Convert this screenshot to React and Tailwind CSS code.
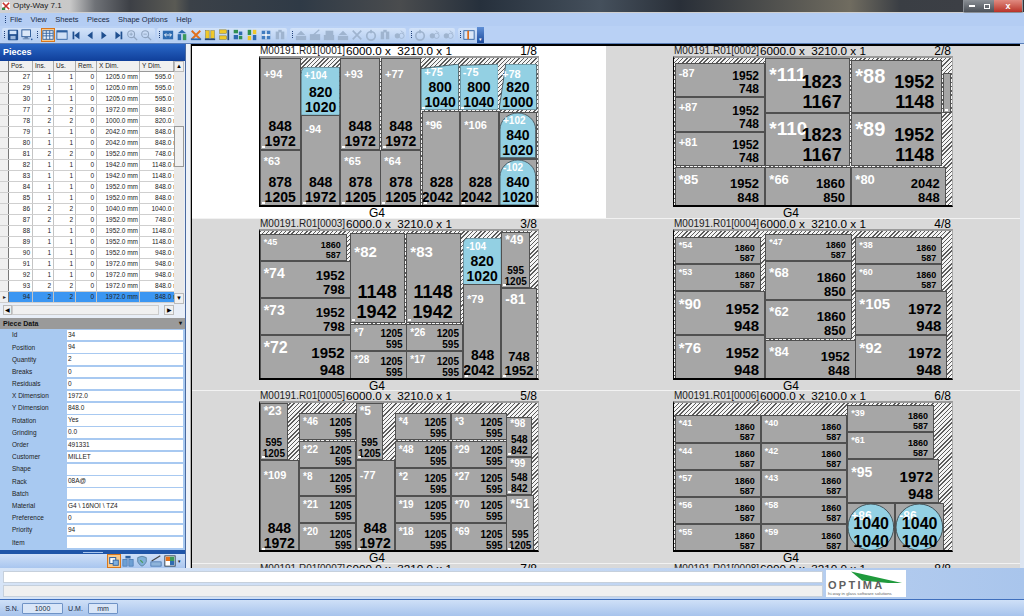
import React from "react";

const sans = "[font-family:'Liberation_Sans',Arial,sans-serif]";

const BLUE = "#93d0e3";
const shapes = {
  roundtl: <path d="M14 0H100V100H0V16Q0 0 14 0Z" />,
  slantL: <path d="M0 10L100 0V100H0Z" />,
  slantR: <path d="M0 3L100 0V100H0Z" />,
  cut: <path d="M18 0H100V100H0Z" />,
  arch: <path d="M0 100V37A50 37 0 0 1 100 37V100Z" />,
  circle: <ellipse cx="50" cy="50" rx="50" ry="50" />,
};

// [x1, y1, x2, y2, label, dimA, dimB, labelSize, dimSize, options]  (coordinates are on a 3x grid of the sheet)
const P = (x1, y1, x2, y2, l, a, b, ls, ds, o = {}) => ({ x1, y1, x2, y2, l, a, b, ls, ds, ...o });
const Cu = { c: 1, m: 1 };

const sheets = [
  {
    id: "0001", n: "1/8", ox: 28, oy: 40, pieces: [
      P(30, 47, 150, 320, "+94", "848", "1972", 11, 14, { ...Cu, t: 10 }),
      P(155, 73, 268, 215, "+104", "820", "1020", 10, 14, { c: 1, s: "roundtl", t: 4 }),
      P(155, 217, 268, 488, "-94", "848", "1972", 11, 14, { ...Cu, t: 8 }),
      P(272, 47, 388, 320, "+93", "848", "1972", 11, 14, { ...Cu, t: 10 }),
      P(394, 47, 510, 320, "+77", "848", "1972", 11, 14, { ...Cu, t: 10 }),
      P(30, 322, 150, 488, "*63", "878", "1205", 11, 14, { ...Cu, t: 5 }),
      P(272, 322, 390, 488, "*65", "878", "1205", 11, 14, { ...Cu, t: 5 }),
      P(392, 322, 512, 488, "*64", "878", "1205", 11, 14, { ...Cu, t: 5 }),
      P(515, 65, 625, 200, "+75", "800", "1040", 11, 14, { ...Cu, s: "slantL", t: 3 }),
      P(630, 65, 742, 200, "-75", "800", "1040", 11, 14, { ...Cu, s: "slantR", t: 3 }),
      P(748, 65, 858, 200, "+78", "820", "1000", 11, 14, { c: 1, s: "cut", t: 5 }),
      P(516, 205, 628, 488, "*96", "828", "2042", 11, 14, { m: 1, t: 8 }),
      P(632, 205, 745, 488, "*106", "828", "2042", 11, 14, { m: 1, t: 8 }),
      P(748, 208, 858, 345, "+102", "840", "1020", 10, 14, { c: 1, s: "arch", bg: 1, t: 3 }),
      P(748, 350, 858, 488, "-102", "840", "1020", 10, 14, { c: 1, s: "arch", bg: 1, t: 3 }),
    ],
  },
  {
    id: "0002", n: "2/8", ox: 25, oy: 40, pieces: [
      P(30, 60, 298, 160, "-87", "1952", "748", 11, 12, { t: 4 }),
      P(30, 163, 298, 265, "+87", "1952", "748", 11, 12, { t: 4 }),
      P(30, 267, 298, 368, "+81", "1952", "748", 11, 12, { t: 4 }),
      P(30, 372, 298, 488, "*85", "1952", "848", 13, 13, { t: 5 }),
      P(302, 47, 552, 207, "*111", "1823", "1167", 19, 18, { t: 6 }),
      P(302, 210, 552, 368, "*110", "1823", "1167", 19, 18, { t: 5 }),
      P(560, 52, 830, 208, "*88", "1952", "1148", 20, 18, { t: 5 }),
      P(560, 212, 830, 368, "*89", "1952", "1148", 20, 18, { t: 5 }),
      P(835, 92, 857, 208, "", "", "", 9, 9, { m: 1 }),
      P(302, 372, 556, 488, "*66", "1860", "850", 13, 13, { t: 5 }),
      P(560, 372, 840, 488, "*80", "2042", "848", 13, 13, { t: 5 }),
    ],
  },
  {
    id: "0003", n: "3/8", ox: 28, oy: 43, pieces: [
      P(30, 60, 288, 137, "*45", "1860", "587", 9, 9, { t: 3 }),
      P(30, 140, 300, 248, "*74", "1952", "798", 14, 13, { t: 4 }),
      P(30, 250, 300, 360, "*73", "1952", "798", 14, 13, { t: 4 }),
      P(30, 363, 300, 492, "*72", "1952", "948", 16, 15, { t: 4 }),
      P(302, 57, 462, 325, "*82", "1148", "1942", 15, 18, { m: 1, t: 10 }),
      P(470, 57, 630, 325, "*83", "1148", "1942", 15, 18, { m: 1, t: 10 }),
      P(302, 328, 468, 408, "*7", "1205", "595", 10, 10, { t: 3 }),
      P(302, 411, 468, 492, "*28", "1205", "595", 10, 10, { t: 3 }),
      P(470, 328, 637, 408, "*26", "1205", "595", 10, 10, { t: 3 }),
      P(470, 411, 637, 492, "*17", "1205", "595", 10, 10, { t: 3 }),
      P(640, 70, 752, 207, "-104", "820", "1020", 10, 14, { c: 1, s: "roundtl", t: 4 }),
      P(755, 53, 838, 220, "*49", "595", "1205", 12, 10, { ...Cu, t: 1 }),
      P(640, 210, 752, 492, "*79", "848", "2042", 11, 14, { m: 1, t: 9 }),
      P(755, 222, 858, 492, "-81", "748", "1952", 14, 13, { ...Cu, t: 3 }),
    ],
  },
  {
    id: "0004", n: "4/8", ox: 25, oy: 43, pieces: [
      P(30, 68, 285, 147, "*54", "1860", "587", 9, 9, { t: 3 }),
      P(30, 150, 285, 227, "*53", "1860", "587", 9, 9, { t: 3 }),
      P(302, 58, 558, 137, "*47", "1860", "587", 9, 9, { t: 3 }),
      P(302, 140, 558, 255, "*68", "1860", "850", 13, 13, { t: 4 }),
      P(302, 258, 558, 373, "*62", "1860", "850", 13, 13, { t: 4 }),
      P(302, 377, 570, 492, "*84", "1952", "848", 13, 13, { t: 4 }),
      P(572, 68, 830, 147, "*38", "1860", "587", 9, 9, { t: 3 }),
      P(572, 150, 830, 227, "*60", "1860", "587", 9, 9, { t: 3 }),
      P(30, 230, 298, 360, "*90", "1952", "948", 15, 15, { t: 4 }),
      P(30, 363, 298, 492, "*76", "1952", "948", 15, 15, { t: 4 }),
      P(572, 230, 845, 360, "*105", "1972", "948", 15, 15, { t: 4 }),
      P(572, 363, 845, 492, "*92", "1972", "948", 15, 15, { t: 4 }),
    ],
  },
  {
    id: "0005", n: "5/8", ox: 28, oy: 43, pieces: [
      P(30, 50, 112, 217, "*23", "595", "1205", 12, 10, { ...Cu, t: 1 }),
      P(148, 80, 315, 158, "*46", "1205", "595", 10, 10, { t: 3 }),
      P(148, 162, 315, 242, "*22", "1205", "595", 10, 10, { t: 3 }),
      P(148, 245, 315, 325, "*8", "1205", "595", 10, 10, { t: 3 }),
      P(148, 328, 315, 407, "*21", "1205", "595", 10, 10, { t: 3 }),
      P(148, 410, 315, 492, "*20", "1205", "595", 10, 10, { t: 3 }),
      P(30, 220, 145, 492, "*109", "848", "1972", 11, 14, { ...Cu, t: 9 }),
      P(318, 50, 398, 217, "*5", "595", "1205", 12, 10, { ...Cu, t: 1 }),
      P(318, 220, 432, 492, "-77", "848", "1972", 11, 14, { ...Cu, t: 9 }),
      P(435, 80, 600, 158, "*4", "1205", "595", 10, 10, { t: 3 }),
      P(603, 80, 768, 158, "*3", "1205", "595", 10, 10, { t: 3 }),
      P(435, 162, 600, 242, "*48", "1205", "595", 10, 10, { t: 3 }),
      P(603, 162, 768, 242, "*29", "1205", "595", 10, 10, { t: 3 }),
      P(435, 245, 600, 325, "*2", "1205", "595", 10, 10, { t: 3 }),
      P(603, 245, 768, 325, "*27", "1205", "595", 10, 10, { t: 3 }),
      P(435, 328, 600, 407, "*19", "1205", "595", 10, 10, { t: 3 }),
      P(603, 328, 768, 407, "*70", "1205", "595", 10, 10, { t: 3 }),
      P(435, 410, 600, 492, "*18", "1205", "595", 10, 10, { t: 3 }),
      P(603, 410, 768, 492, "*69", "1205", "595", 10, 10, { t: 3 }),
      P(770, 92, 845, 207, "*98", "548", "842", 10, 10, { ...Cu, t: 1 }),
      P(770, 210, 845, 323, "*99", "548", "842", 10, 10, { ...Cu, t: 1 }),
      P(770, 326, 850, 492, "*51", "595", "1205", 13, 10, { ...Cu, t: 1 }),
    ],
  },
  {
    id: "0006", n: "6/8", ox: 25, oy: 43, pieces: [
      ...[85, 168, 250, 331, 413].map((y, i) =>
        P(30, y, 285, y + (i === 0 ? 80 : 79), ["*41", "*44", "*57", "*56", "*55"][i], "1860", "587", 9, 9, { t: 3 })),
      ...[85, 168, 250, 331, 413].map((y, i) =>
        P(288, y, 545, y + (i === 0 ? 80 : 79), ["*40", "*42", "*43", "*58", "*59"][i], "1860", "587", 9, 9, { t: 3 })),
      P(548, 55, 805, 133, "*39", "1860", "587", 9, 9, { t: 3 }),
      P(548, 136, 805, 213, "*61", "1860", "587", 9, 9, { t: 3 }),
      P(548, 216, 820, 347, "*95", "1972", "948", 14, 15, { t: 5 }),
      P(548, 350, 688, 492, "+86", "1040", "1040", 12, 16, { c: 1, s: "circle", bg: 1, t: 6 }),
      P(692, 350, 835, 492, "-86", "1040", "1040", 12, 16, { c: 1, s: "circle", bg: 1, t: 6 }),
    ],
  },
];

function Piece({ p, ox, oy }) {
  const r = p.ds >= 16 ? 7 : p.ds === 14 ? 6 : p.ds === 10 ? 3 : 5;
  const box = {
    left: (p.x1 - ox) / 3 - 1,
    top: (p.y1 - oy) / 3 - 2,
    width: (p.x2 - p.x1) / 3 + 1,
    height: (p.y2 - p.y1) / 3 + 1,
  };
  const lh = Math.round(p.ds * 1.1);
  const shaped = !!p.s;
  const plainBg = !shaped || p.bg;
  return (
    <div
      className={`absolute overflow-hidden ${plainBg ? "bg-[#a6a6a6] border border-[#505050]" : ""}`}
      style={box}
    >
      {shaped && (
        <svg viewBox="0 0 100 100" preserveAspectRatio="none" className="absolute inset-0 w-full h-full">
          <g fill={BLUE} stroke="#3d4a50" strokeWidth="2">
            {shapes[p.s]}
          </g>
        </svg>
      )}
      <div
        className="absolute left-[3px] font-bold text-white leading-none"
        style={{ top: p.t ?? 2, fontSize: p.ls }}
      >
        {p.l}
      </div>
      <div
        className={`absolute inset-0 flex flex-col justify-end font-bold text-black ${p.c ? "items-center" : "items-end"}`}
        style={{ fontSize: p.ds, lineHeight: `${lh}px`, paddingRight: p.c ? 0 : r }}
      >
        <span>{p.a}</span>
        <span>{p.b}</span>
      </div>
      {p.m && <span className="absolute left-[1px] bottom-[1px] w-[3px] h-[2px] bg-white" />}
    </div>
  );
}

function Header({ id, n }) {
  return (
    <div className="flex w-[280px] h-[10px] items-center shrink-0 text-black">
      <span className="text-[10px] leading-[10px] pl-[1px] w-[87px] text-[#222] whitespace-nowrap">M00191.R01[{id}]</span>
      <span className="text-[11.7px] leading-[10px] whitespace-pre">6000.0 x  3210.0 x 1</span>
      <span className="text-[12px] leading-[10px] ml-auto pr-[2px]">{n}</span>
    </div>
  );
}

function SheetCell({ s, first }) {
  return (
    <div className={`flex flex-col items-center h-[172.5px] overflow-hidden border-b border-[#f2f2f2] ${first ? "bg-white" : "bg-[#d9d9d9]"}`}>
      <Header id={s.id} n={s.n} />
      <div className="relative overflow-hidden w-[280px] h-[151px] shrink-0 border-l border-b-2 border-t-2 border-r border-l-black border-b-black border-t-[#9a9a9a] border-r-[#a8a8a8] bg-[repeating-linear-gradient(135deg,#5c5c5c_0_1px,#f4f4f4_1px_3px)]">
        {s.pieces.map((p, i) => <Piece key={i} p={p} ox={s.ox} oy={s.oy} />)}
      </div>
      <div className="text-[12px] leading-[12px] text-black mr-[44px]">G4</div>
    </div>
  );
}

const rows = [
  [27, 1, 1, 0, "1205.0", "595.0"], [29, 1, 1, 0, "1205.0", "595.0"], [30, 1, 1, 0, "1205.0", "595.0"],
  [77, 2, 2, 0, "1972.0", "848.0"], [78, 2, 2, 0, "1000.0", "820.0"], [79, 1, 1, 0, "2042.0", "848.0"],
  [80, 1, 1, 0, "2042.0", "848.0"], [81, 2, 2, 0, "1952.0", "748.0"], [82, 1, 1, 0, "1942.0", "1148.0"],
  [83, 1, 1, 0, "1942.0", "1148.0"], [84, 1, 1, 0, "1952.0", "848.0"], [85, 1, 1, 0, "1952.0", "848.0"],
  [86, 2, 2, 0, "1040.0", "1040.0"], [87, 2, 2, 0, "1952.0", "748.0"], [88, 1, 1, 0, "1952.0", "1148.0"],
  [89, 1, 1, 0, "1952.0", "1148.0"], [90, 1, 1, 0, "1952.0", "948.0"], [91, 1, 1, 0, "1972.0", "948.0"],
  [92, 1, 1, 0, "1972.0", "948.0"], [93, 2, 2, 0, "1972.0", "848.0"], [94, 2, 2, 0, "1972.0", "848.0"],
];

const fields = [
  ["Id", "34"], ["Position", "94"], ["Quantity", "2"], ["Breaks", "0"], ["Residuals", "0"],
  ["X Dimension", "1972.0"], ["Y Dimension", "848.0"], ["Rotation", "Yes"], ["Grinding", "0.0"],
  ["Order", "491331"], ["Customer", "MILLET"], ["Shape", ""], ["Rack", "08A@"], ["Batch", ""],
  ["Material", "G4 \\ 16NOI \\ TZ4"], ["Preference", "0"], ["Priority", "94"], ["Item", ""],
];

const gridCols = "grid grid-cols-[9px_24px_21px_22px_21px_43px_34px]";

function PiecesTable() {
  const heads = ["Pos.", "Ins.", "Us.", "Rem.", "X Dim.", "Y Dim."];
  return (
    <div className="w-[174px] text-[6.5px] text-[#222]">
      <div className={`${gridCols} h-[11px] leading-[10px] bg-[#f0f0f0] border-b border-[#999]`}>
        <div className="border-r border-[#777]" />
        {heads.map((h) => (
          <div key={h} className="pl-[2px] border-r border-[#aaa]">{h}</div>
        ))}
      </div>
      {rows.map((r, i) => {
        const sel = r[0] === 94;
        return (
          <div key={i} className={`${gridCols} h-[11px] leading-[10px] border-b border-[#cfcfcf] ${sel ? "bg-[#3b96f2]" : "bg-white"}`}>
            <div className="border-r border-[#777] bg-[#f0f0f0] flex items-center justify-center text-[6px] leading-none">
              {sel ? "▸" : ""}
            </div>
            {r.slice(0, 4).map((v, j) => (
              <div key={j} className="text-right pr-[2px] border-r border-[#c4c4c4]">{v}</div>
            ))}
            <div className="text-right pr-[1px] border-r border-[#c4c4c4] whitespace-nowrap">{r[4]} mm</div>
            <div className="flex justify-end overflow-hidden whitespace-nowrap"><span className="-mr-[10px]">{r[5]} mm</span></div>
          </div>
        );
      })}
    </div>
  );
}

function ScrollBtn({ children, className = "" }) {
  return (
    <div className={`flex items-center justify-center bg-[#f0f0f0] border border-[#bbb] text-[6px] leading-none text-black ${className}`}>
      {children}
    </div>
  );
}

function PieceData() {
  return (
    <div className="flex flex-col bg-[#a8c9f1] h-[232px]">
      <div className="h-[11px] flex items-center justify-between px-[3px] bg-[#9a9a9a] text-[7px] font-bold text-[#111]">
        <span>Piece Data</span><span className="text-[6px]">▾</span>
      </div>
      <div className="flex flex-col pt-[0.5px] pl-[12px] pr-[2px] gap-[1.7px]">
        {fields.map(([k, v]) => (
          <div key={k} className="flex h-[10.5px] items-center text-[6.5px] text-[#222]">
            <span className="w-[55px]">{k}</span>
            <span className="flex-1 h-full bg-white pl-[1px] leading-[10.5px] whitespace-nowrap">{v}</span>
          </div>
        ))}
      </div>
    </div>
  );
}

const Grip = ({ w = "w-[4px]" }) => (
  <span className={`${w} h-[12px] flex flex-col items-center justify-center gap-[1px] shrink-0`}>
    <i className="w-[1px] h-[1px] bg-[#22427a]" /><i className="w-[1px] h-[1px] bg-[#22427a]" />
    <i className="w-[1px] h-[1px] bg-[#22427a]" /><i className="w-[1px] h-[1px] bg-[#22427a]" />
  </span>
);

const D = "#1f4f8f";
const G = "#9fb4cf";
const Y = "#f0c92a";
const icons = {
  save: <><rect x="1" y="1" width="12" height="12" rx="1" fill={D} /><rect x="3" y="2" width="8" height="4" fill="#cfe3fa" /><rect x="4" y="8" width="6" height="4" fill="#9cb8dc" /></>,
  monitor: <><rect x="1" y="1" width="10" height="8" fill="#dbe8f8" stroke={D} /><rect x="4" y="9" width="4" height="2" fill="#5a7aa5" /><rect x="2" y="11" width="8" height="1" fill="#5a7aa5" /><circle cx="12.5" cy="12" r="1" fill="#2a5a9f" /></>,
  grid: <><rect x="1" y="2" width="12" height="10" fill="#e6effa" stroke="#2c5f9f" /><path d="M1 5H13M1 8H13M5 2V12M9 2V12" stroke="#2c5f9f" /></>,
  win: <><rect x="1" y="2" width="12" height="10" fill="#cfe0f6" stroke="#2c5f9f" /><rect x="1" y="2" width="12" height="2" fill="#2c5f9f" /></>,
  first: <><rect x="3" y="3" width="2" height="9" fill={D} /><path d="M11 3V12L5 7.5Z" fill={D} /></>,
  prev: <path d="M10 3V12L4 7.5Z" fill={D} />,
  next: <path d="M4 3V12L10 7.5Z" fill={D} />,
  last: <><rect x="10" y="3" width="2" height="9" fill={D} /><path d="M4 3V12L10 7.5Z" fill={D} /></>,
  zin: <><circle cx="6" cy="6" r="4" fill="none" stroke="#8fa4c0" strokeWidth="1.3" /><path d="M9 9L13 13" stroke="#8fa4c0" strokeWidth="1.5" /><path d="M4 6H8M6 4V8" stroke="#8fa4c0" /></>,
  zout: <><circle cx="6" cy="6" r="4" fill="none" stroke="#8fa4c0" strokeWidth="1.3" /><path d="M9 9L13 13" stroke="#8fa4c0" strokeWidth="1.5" /><path d="M4 6H8" stroke="#8fa4c0" /></>,
  fit: <><rect x="1" y="2" width="12" height="10" fill="#2e6bb0" /><path d="M3 7H11M3 7L5 5M3 7L5 9M11 7L9 5M11 7L9 9" stroke="#fff" /></>,
  stack: <><path d="M7 1L12 5H2Z" fill="#2e6bb0" /><rect x="2" y="6" width="4" height="7" fill="#2e6bb0" /><rect x="8" y="6" width="4" height="7" fill="#3d9a5a" /></>,
  xx: <><path d="M2 2L12 12M12 2L2 12" stroke="#e2701c" strokeWidth="2.2" /><rect x="1" y="11" width="12" height="2" fill="#2e6bb0" /></>,
  cols: <><rect x="2" y="2" width="4" height="9" fill={Y} stroke="#7a6a12" strokeWidth=".5" /><rect x="8" y="2" width="4" height="9" fill={Y} stroke="#7a6a12" strokeWidth=".5" /><rect x="1" y="11" width="12" height="2" fill="#274b7a" /></>,
  rows: <><rect x="2" y="1" width="8" height="4" fill={Y} stroke="#7a6a12" strokeWidth=".5" /><rect x="2" y="8" width="8" height="4" fill={Y} stroke="#7a6a12" strokeWidth=".5" /><rect x="11" y="1" width="2" height="12" fill="#274b7a" /></>,
  green: <><rect x="2" y="1" width="5" height="4" fill="#2f8f52" /><rect x="8" y="3" width="4" height="4" fill="#2e6bb0" /><rect x="2" y="7" width="5" height="5" fill="#2e6bb0" /><rect x="8" y="8" width="4" height="4" fill="#2f8f52" /></>,
  mix: <><rect x="2" y="1" width="4" height="6" fill="#2f8f52" /><rect x="8" y="1" width="4" height="5" fill={Y} /><rect x="2" y="8" width="4" height="5" fill={Y} /><rect x="8" y="7" width="4" height="6" fill="#2e6bb0" /></>,
  cross: <><rect x="2" y="2" width="10" height="10" fill="#3f7cc0" /><path d="M7 2V12M2 7H12" stroke="#fff" strokeWidth="1.5" /></>,
  d1: <><rect x="2" y="3" width="4" height="9" fill={G} /><rect x="8" y="3" width="4" height="9" fill={G} /><rect x="5" y="1" width="4" height="3" fill={G} /></>,
  d2: <><path d="M7 2L12 7H2Z" fill={G} /><rect x="1" y="8" width="12" height="5" fill={G} /></>,
  d3: <><rect x="1" y="6" width="12" height="7" fill={G} /><path d="M4 8L12 1" stroke={G} strokeWidth="1.5" /></>,
  d4: <><rect x="3" y="2" width="9" height="5" fill={G} /><rect x="1" y="7" width="12" height="6" fill={G} /></>,
  d5: <><path d="M2 2L12 12M12 2L2 12" stroke={G} strokeWidth="2" /></>,
  d6: <><circle cx="7" cy="8" r="5" fill="none" stroke={G} strokeWidth="2" /><rect x="6" y="1" width="2" height="4" fill={G} /></>,
  d7: <><circle cx="5" cy="8" r="3" fill={G} /><circle cx="10" cy="8" r="3" fill="none" stroke={G} /><path d="M9 2L13 5" stroke={G} /></>,
  panel: <><rect x="1" y="2" width="12" height="10" fill="#dbe8f8" stroke="#2c5f9f" /><rect x="5" y="2" width="2" height="10" fill="#e2701c" /></>,
  link: <><rect x="2" y="3" width="7" height="7" fill="#fff" stroke="#2c5f9f" strokeWidth="1.2" /><rect x="6" y="6" width="6" height="6" fill="#7fb0e0" stroke="#2c5f9f" /></>,
  bars: <><rect x="1" y="5" width="5" height="8" fill="#6ea0d4" stroke="#2c5f9f" strokeWidth=".6" /><rect x="8" y="5" width="5" height="8" fill="#6ea0d4" stroke="#2c5f9f" strokeWidth=".6" /><rect x="4" y="1" width="6" height="3" fill="#2c5f9f" /></>,
  shield: <><path d="M2 3Q7 0 12 3V8Q10 12 7 13Q4 12 2 8Z" fill="#7fb0d8" stroke="#5a7f9f" /><path d="M5 6L8 9" stroke="#4c9a5a" strokeWidth="1.4" /></>,
  stair: <><rect x="1" y="8" width="12" height="5" fill="#8fb4da" stroke="#2c5f9f" strokeWidth=".7" /><path d="M2 7L12 1" stroke="#444" strokeWidth="1.4" /></>,
  colorg: <><rect x="1" y="1" width="12" height="12" fill="#fff" stroke="#234" /><rect x="2" y="2" width="5" height="5" fill="#e2701c" /><rect x="7" y="7" width="5" height="5" fill="#2e6bb0" /><rect x="7" y="2" width="5" height="5" fill="#3d9a5a" /></>,
};

const Ico = ({ k, active }) => (
  <span className={`w-[14px] h-[14px] flex items-center justify-center shrink-0 ${active ? "bg-[#f9c98a] border border-[#d9771c]" : ""}`}>
    <svg viewBox="0 0 14 14" className="w-[12px] h-[12px]">{icons[k]}</svg>
  </span>
);

const Group = ({ children, className = "" }) => (
  <div className={`flex items-center h-[14px] rounded-[2px] bg-gradient-to-b from-[#d3e3f9] to-[#b4cdf0] ${className}`}>{children}</div>
);

function Toolbar() {
  return (
    <div className="h-[18px] flex items-center pl-[2px] bg-[#b9d1f5] border-b border-[#5a7fb8]">
      <Group className="w-[153px]">
        <Grip /><Ico k="save" /><Ico k="monitor" /><Grip w="w-[7px]" /><Ico k="grid" active /><Ico k="win" />
        <Ico k="first" /><Ico k="prev" /><Ico k="next" /><Ico k="last" /><Ico k="zin" /><Ico k="zout" />
      </Group>
      <Group className="ml-[2px] w-[130px]">
        <Grip /><Ico k="fit" /><Ico k="stack" /><Ico k="xx" /><Ico k="cols" /><Ico k="rows" /><Ico k="green" /><Ico k="mix" /><Ico k="cross" /><Ico k="d1" />
      </Group>
      <Group className="ml-[3px] w-[116px]">
        <Grip /><Ico k="d2" /><Ico k="d3" /><Ico k="d4" /><Ico k="d2" /><Ico k="d5" /><Ico k="d6" /><Ico k="d1" /><Ico k="d7" />
      </Group>
      <Group className="ml-[3px] w-[46px]">
        <Grip /><Ico k="d6" /><Ico k="d7" /><Ico k="d7" />
      </Group>
      <Group className="ml-[3px] w-[19px]">
        <Grip /><Ico k="panel" />
      </Group>
      <div className="w-[7px] h-[16px] bg-gradient-to-b from-[#5f8fd6] to-[#1d4b9c] text-white text-[5px] leading-none flex items-end justify-center pb-[1px]">▾</div>
    </div>
  );
}

function Logo() {
  return (
    <div className="relative w-[80px] h-[27px] bg-white overflow-hidden shrink-0">
      <svg viewBox="0 0 80 27" className="absolute inset-0 w-full h-full">
        <polygon points="25,1.5 76,13 62,13 36,10.5" fill="#1f9a3c" />
      </svg>
      <div className="absolute left-[2px] top-[10px] text-[11px] leading-[11px] font-bold text-[#5f5f5f] tracking-[2.3px] whitespace-nowrap">OPTIMA</div>
      <div className="absolute left-[2px] top-[21px] text-[4.3px] leading-[5px] text-[#666] whitespace-nowrap">hi-way in glass software solutions</div>
    </div>
  );
}

function TitleBar() {
  return (
    <div className="h-[13px] relative flex items-center bg-[linear-gradient(90deg,#d0d0d0_0,#c8c8c8_70px,#6f7277_95px,#3d4046_130px,#5a5a54_175px,#3b4148_190px,#2f3a46_300px,#4a4c4e_400px,#26303c_480px,#45505c_600px,#292f38_680px,#706c60_850px,#3a3e44_900px,#3c3f45_960px,#2c3138_1024px)] border-b border-[#cfcfcf]">
      <svg viewBox="0 0 10 10" className="ml-[2px] w-[8px] h-[8px]">
        <rect width="10" height="10" fill="#fff" /><path d="M1 1L9 9M9 1L1 9" stroke="#c7302a" strokeWidth="2" /><rect y="7" width="4" height="3" fill="#2e8a4a" />
      </svg>
      <span className="ml-[3px] text-[8px] leading-none text-[#1a1a1a]">Opty-Way 7.1</span>
      <div className="absolute right-[1px] top-0 h-[13px] flex border border-t-0 border-[#8a8f96] rounded-b-[2px] overflow-hidden">
        <div className="w-[15px] flex items-center justify-center bg-gradient-to-b from-[#8a8f95] to-[#4c5158]"><i className="w-[6px] h-[2px] bg-white" /></div>
        <div className="w-[15px] flex items-center justify-center bg-gradient-to-b from-[#8a8f95] to-[#4c5158]"><i className="w-[6px] h-[5px] border border-white" /></div>
        <div className="w-[28px] flex items-center justify-center bg-gradient-to-b from-[#e08a80] to-[#b83027] text-white text-[9px] leading-none font-bold">x</div>
      </div>
    </div>
  );
}

export default function App() {
  return (
    <div className={`w-[1024px] h-[616px] flex flex-col overflow-hidden bg-[#b9d1f5] ${sans}`}>
      <TitleBar />
      <div className="h-[13px] flex items-center pl-[3px] bg-[#b4cdf3] text-[7.5px] leading-none text-[#1a2a44]">
        <Grip />
        <div className="flex ml-[3px] gap-[8.5px]">
          <span>File</span><span>View</span><span>Sheets</span><span>Pieces</span><span>Shape Options</span><span>Help</span>
        </div>
      </div>
      <Toolbar />

      <div className="h-[524px] flex bg-[#dbe6f5]">
        <div className="w-[186px] flex flex-col bg-[#e8eef7] border-r border-[#4a6aa0]">
          <div className="h-[17px] flex items-center pl-[3px] bg-gradient-to-b from-[#2a68c8] to-[#103f9a] text-white font-bold text-[9px] leading-none">Pieces</div>
          <div className="flex h-[243px]">
            <PiecesTable />
            <div className="w-[10px] flex flex-col bg-[#e9e9e9]">
              <ScrollBtn className="h-[11px]">▲</ScrollBtn>
              <div className="h-[54px]" />
              <div className="h-[41px] bg-[#f0f0f0] border border-[#999]" />
              <div className="flex-1" />
              <ScrollBtn className="h-[11px]">▼</ScrollBtn>
            </div>
          </div>
          <div className="h-[11px] mt-[1px] flex pl-[3px] w-[174px]">
            <ScrollBtn className="w-[9px]">◀</ScrollBtn>
            <div className="flex-1 bg-[#f0f0f0] border border-[#ccc]" />
            <div className="w-[5px]" />
            <ScrollBtn className="w-[10px]">▶</ScrollBtn>
          </div>
          <div className="h-[3px]" />
          <PieceData />
          <div className="h-[4px] bg-[#1f55a8] flex items-center justify-center"><i className="w-[20px] h-[1px] bg-[#a9c6ee]" /></div>
          <div className="flex-1 flex items-center justify-end pr-[3px] bg-gradient-to-b from-[#cfe0f8] to-[#a9c6ef]">
            <Ico k="link" active /><Ico k="bars" /><Ico k="shield" /><Ico k="stair" /><Ico k="colorg" />
            <span className="w-[5px] text-[5px] leading-none text-[#123] text-center">▾</span>
          </div>
        </div>

        <div className="w-[5px] bg-[#eef2f8] border-r border-[#b5b5b5]" />

        <div className="w-[829px] overflow-hidden bg-[#d9d9d9] border-t-2 border-l border-black">
          <div className="grid grid-cols-[414px_414px]">
            {sheets.map((s, i) => <SheetCell key={s.id} s={s} first={i === 0} />)}
            <div className="flex justify-center bg-[#d9d9d9]"><Header id="0007" n="7/8" /></div>
            <div className="flex justify-center bg-[#d9d9d9]"><Header id="0008" n="8/8" /></div>
          </div>
        </div>
        <div className="w-[4px] bg-[#dde5f1]" />
      </div>

      <div className="h-[32px] flex items-center pl-[3px] bg-gradient-to-r from-[#d6e4f7] via-[#c8daf4] to-[#a9c5ec] border-b border-[#3f6fbd]">
        <div className="w-[820px] flex flex-col gap-[2px]">
          <div className="h-[12px] bg-white border border-[#c6d0dc]" />
          <div className="h-[12px] bg-[#f0f0f0] border border-[#c6d0dc]" />
        </div>
        <div className="ml-[3px]"><Logo /></div>
      </div>

      <div className="flex-1 flex items-center pl-[2px] bg-gradient-to-b from-[#cfe0f7] to-[#a7c3ec] text-[7px] text-[#1a2a44] leading-none">
        <span className="w-[20px] text-center">S.N.</span>
        <span className="w-[41px] h-[11px] flex items-center justify-center bg-[#d9e6f8] border border-[#6f93c6] rounded-[1px]">1000</span>
        <span className="w-[25px] text-center">U.M.</span>
        <span className="w-[30px] h-[11px] flex items-center justify-center bg-[#d9e6f8] border border-[#6f93c6] rounded-[1px]">mm</span>
      </div>
    </div>
  );
}
